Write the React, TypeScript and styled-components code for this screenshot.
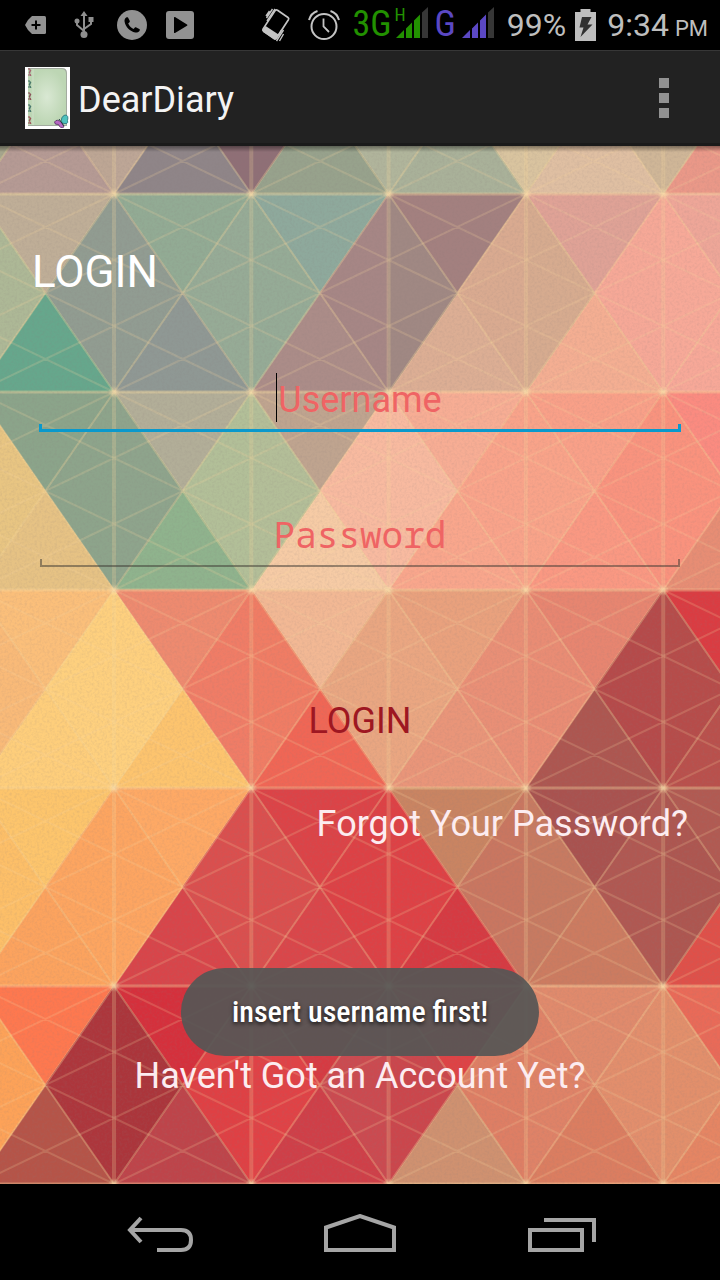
import React from "react";
import styled, { createGlobalStyle, css } from "styled-components";

const GlobalStyle = createGlobalStyle`
  *, *::before, *::after { box-sizing: border-box; }
  body { margin: 0; background: #000; font-family: Roboto, "Noto Sans", sans-serif; }
`;

const Screen = styled.div`
  min-height: 100vh;
  display: flex;
  flex-direction: column;
  background: #000;
`;

/* ---------- status bar ---------- */

const StatusBar = styled.header`
  height: 50px;
  padding: 0 12px;
  display: flex;
  align-items: center;
  justify-content: space-between;
  color: #bebebe;
`;

const StatusGroup = styled.div`
  display: flex;
  align-items: center;
`;

const IconSlot = styled.span`
  width: 48px;
  height: 50px;
  display: flex;
  align-items: center;
  justify-content: center;
`;

const StatusText = styled.span<{ $gap: number }>`
  font-size: 32px;
  line-height: 52px;
  margin-left: ${(p) => p.$gap}px;
  white-space: nowrap;
`;

const Meridiem = styled.small`
  font-size: 22px;
  line-height: 22px;
  margin-left: 6px;
`;

const Network = styled.span<{ $color: string; $gap: number }>`
  display: flex;
  align-items: flex-start;
  height: 50px;
  margin-left: ${(p) => p.$gap}px;
  color: ${(p) => p.$color};
  font-family: "Roboto Condensed", Roboto, sans-serif;
  font-size: 36px;
  line-height: 48px;
`;

const SignalBox = styled.span<{ $gap: number }>`
  position: relative;
  height: 50px;
  width: 33px;
  margin-left: ${(p) => p.$gap}px;
  display: flex;
  align-items: flex-start;
  padding-top: 7px;
`;

const NetworkBadge = styled.span`
  position: absolute;
  top: 6px;
  left: -1px;
  font-size: 18px;
  line-height: 18px;
`;

const BatterySlot = styled.span`
  display: flex;
  margin-left: 9px;
`;

/* ---------- action bar ---------- */

const ActionBar = styled.div`
  height: 96px;
  padding: 0 24px 1px 25px;
  display: flex;
  align-items: center;
  background: #222;
  border-top: 1px solid #373737;
  box-shadow: inset 0 -3px 0 #1a1a1a;
`;

const AppTitle = styled.h1`
  margin: 0 0 0 8px;
  padding-top: 3px;
  flex: 1;
  font-size: 36px;
  line-height: 48px;
  font-weight: 400;
  color: #f3f3f3;
`;

const OverflowButton = styled.button`
  width: 64px;
  height: 64px;
  padding: 0;
  border: 0;
  background: none;
  display: flex;
  flex-direction: column;
  align-items: center;
  justify-content: center;
  gap: 5px;
`;

const OverflowDot = styled.span`
  width: 10px;
  height: 10px;
  background: #929292;
`;

/* ---------- login form ---------- */

const Content = styled.main`
  position: relative;
  isolation: isolate;
  overflow: hidden;
  flex: 1;
  display: flex;
  flex-direction: column;
  padding: 100px 32px 84px;
`;

const Wallpaper = styled.svg`
  position: absolute;
  inset: 0;
  width: 100%;
  height: 100%;
  z-index: -1;
`;

const Form = styled.form`
  display: flex;
  flex-direction: column;
`;

const Heading = styled.h2`
  margin: 0 0 78px;
  font-size: 44px;
  line-height: 52px;
  font-weight: 400;
  color: #fff;
`;

const Fields = styled.div`
  display: flex;
  flex-direction: column;
  gap: 79px;
  padding: 0 7px;
`;

const Field = styled.label`
  position: relative;
  display: block;
`;

const fieldText = css`
  font-size: 36px;
  line-height: 48px;
  color: #ef6464;
`;

const Input = styled.input<{ $mono?: boolean }>`
  display: block;
  width: 100%;
  height: 48px;
  padding: 0 8px;
  border: 0;
  outline: 0;
  background: none;
  text-align: center;
  font-family: ${(p) =>
    p.$mono ? '"Noto Sans Mono", "DejaVu Sans Mono", monospace' : "Roboto, sans-serif"};
  ${fieldText}
  &::placeholder {
    color: #ef6464;
    opacity: 1;
  }
`;

const Underline = styled.span<{ $active?: boolean }>`
  display: block;
  height: 8px;
  margin: 0 ${(p) => (p.$active ? 0 : 1)}px;
  border: solid ${(p) => (p.$active ? "#0a99cc" : "rgba(60, 55, 50, 0.5)")};
  border-width: 0 ${(p) => (p.$active ? 3 : 2)}px ${(p) => (p.$active ? 3 : 2)}px;
`;

const Caret = styled.span`
  position: absolute;
  top: -3px;
  left: calc(50% - 84px);
  width: 1px;
  height: 49px;
  background: #000;
`;

const LoginButton = styled.button`
  align-self: center;
  margin: 130px 0 55px;
  padding: 0;
  border: 0;
  background: none;
  font-family: inherit;
  font-size: 36px;
  line-height: 48px;
  color: #9e1722;
`;

const TextLink = styled.a<{ $align: "center" | "flex-end" }>`
  align-self: ${(p) => p.$align};
  font-size: 36px;
  line-height: 48px;
  color: #fcecf0;
  text-decoration: none;
`;

const Spacer = styled.div`
  flex: 1;
`;

const Toast = styled.div`
  position: absolute;
  left: 50%;
  bottom: 128px;
  transform: translateX(-50%);
  height: 88px;
  padding: 0 51px;
  border-radius: 44px;
  background: rgba(86, 86, 85, 0.93);
  color: #fff;
  font-family: "Roboto Condensed", Roboto, sans-serif;
  font-weight: 500;
  font-size: 30px;
  line-height: 88px;
  white-space: nowrap;
  text-shadow: 0 2px 4px rgba(0, 0, 0, 0.75);
`;

/* ---------- navigation bar ---------- */

const NavBar = styled.nav`
  height: 96px;
  padding-top: 2px;
  display: flex;
  justify-content: center;
  background: #000;
`;

const NavButton = styled.button`
  width: 200px;
  padding: 0;
  border: 0;
  background: none;
  display: flex;
  align-items: center;
  justify-content: center;
`;

/* ---------- wallpaper ---------- */

const COL = 137.3;
const ROW = 198;
const X0 = -23.3;
const Y0 = -150;

/* Each cell holds its top, right, bottom and left triangle. */
const CELLS: string[][] = [
  [
    "b99a96 bda694 b59a94 a5a58c",
    "8f8588 8f6f76 8f8588 bda696",
    "97a28c b0b49b 97a28c 8f6f76",
    "a9b199 d9c49f a9b199 b0b59b",
    "dfbfa2 cfb697 dfbfa2 d9c39f",
    "ea9c8c ea9c8c ea9888 cfb697",
  ],
  [
    "bfae97 919c91 66a78c adb896",
    "92ab94 96ab96 8f9894 919c92",
    "8ea99c a68685 ab8c88 95ab96",
    "a3807f d9aa90 dcae94 a08883",
    "dfa296 f6a897 f4ae92 d6ab8f",
    "eea698 f7a898 f7a898 f7a998",
  ],
  [
    "8ba48a 8da48b e6c284 e8c582",
    "b2ae98 b2bf98 8fb38d 8ea48c",
    "bfa48f f8baa0 f6cba5 b3be98",
    "f7ad94 f9a38a f9a68c f8baa0",
    "f9a088 f9937e fa9882 f9a389",
    "fb8b80 e88a74 e78d74 fa927d",
  ],
  [
    "fbbf7a fed07e fece7b f9ba78",
    "ee8a6f f07c66 fdc46e fed07e",
    "f2b894 e9a681 f06655 f07c64",
    "e9a17d e98f76 e99579 eaa681",
    "e78570 b54a4a ad5650 e98c74",
    "da3c42 b54a4a b9504c b64c4a",
  ],
  [
    "fdc56c fda560 fca35e fdbf68",
    "fea965 da4f4e d8454a fda561",
    "dc4347 dd4145 da464a da4f4e",
    "c98462 c97660 d63a42 de4145",
    "a9524f b05852 cc7b60 c77a61",
    "b15a52 b15a52 df5049 ad5650",
  ],
  [
    "fe784f ad363c b55448 fda258",
    "d5303c df4044 be444a ab353b",
    "d63a42 cb4a50 cf3f48 e04246",
    "de4245 de7e64 cf9170 cb464c",
    "e08a6c e28e6c db7d60 df8267",
    "e96a58 e58563 e58563 e28f6b",
  ],
];

function Background() {
  const tiles: React.ReactNode[] = [];
  const steep: string[] = [];
  const shallow: string[] = [];
  const joints: React.ReactNode[] = [];
  CELLS.forEach((row, r) =>
    row.forEach((cell, c) => {
      const x = X0 + c * COL;
      const y = Y0 + r * ROW;
      const a = `${x},${y}`;
      const b = `${x + COL},${y}`;
      const d = `${x + COL},${y + ROW}`;
      const e = `${x},${y + ROW}`;
      const m = `${x + COL / 2},${y + ROW / 2}`;
      const sides = [`${a} ${b}`, `${b} ${d}`, `${d} ${e}`, `${e} ${a}`];
      cell.split(" ").forEach((hex, i) => {
        tiles.push(
          <polygon key={`${r}-${c}-${i}`} points={`${sides[i]} ${m}`} fill={`#${hex}`} stroke={`#${hex}`} />
        );
      });
      steep.push(`M${a}L${d}M${b}L${e}`);
      for (let k = 0; k < 3; k++) {
        const t = y + (k * ROW) / 3;
        const u = t + ROW / 3;
        shallow.push(`M${x},${t}L${x + COL},${u}M${x},${u}L${x + COL},${t}`);
      }
      joints.push(<circle key={`j${r}-${c}`} cx={x + COL} cy={y + ROW} r="6" fill="url(#joint)" />);
    })
  );
  const rows = CELLS.map((_, r) => `M0,${Y0 + (r + 1) * ROW}H720`).join("");
  const cols = CELLS.map((_, c) => `M${X0 + (c + 1) * COL},0V1038`).join("");
  return (
    <Wallpaper viewBox="0 0 720 1038" preserveAspectRatio="none" aria-hidden="true">
      <defs>
        <radialGradient id="joint">
          <stop offset="0" stopColor="#fbdfae" stopOpacity="0.6" />
          <stop offset="1" stopColor="#fbdfae" stopOpacity="0" />
        </radialGradient>
        <linearGradient id="barShadow" x1="0" y1="0" x2="0" y2="1">
          <stop offset="0" stopColor="#000" stopOpacity="0.4" />
          <stop offset="1" stopColor="#000" stopOpacity="0" />
        </linearGradient>
        <filter id="grain" x="0" y="0" width="100%" height="100%">
          <feTurbulence type="fractalNoise" baseFrequency="0.4" numOctaves="2" seed="4" />
          <feColorMatrix values="0 0 0 0 0.25  0 0 0 0 0.2  0 0 0 0 0.2  1 0 0 0 -0.4" />
        </filter>
      </defs>
      {tiles}
      <g fill="none" stroke="#f8d9a0">
        <path d={shallow.join("")} strokeWidth="2" strokeOpacity="0.2" />
        <path d={steep.join("")} strokeWidth="2" strokeOpacity="0.32" />
        <path d={cols} strokeWidth="4" strokeOpacity="0.24" />
        <path d={rows} strokeWidth="3" strokeOpacity="0.38" />
      </g>
      {joints}
      <rect width="720" height="1038" filter="url(#grain)" opacity="0.3" />
      <rect width="720" height="6" fill="url(#barShadow)" />
    </Wallpaper>
  );
}

/* ---------- icons ---------- */

const TagIcon = () => (
  <svg width="22" height="18" viewBox="0 0 22 18">
    <path d="M7 0h12.500a1.500 1.500 0 0 1 1.500 1.500v15a1.500 1.500 0 0 1-1.500 1.500H7L3 14 0 9l3-5z" fill="#929292" />
    <path d="M6.500 9h9M11 4.500v9" stroke="#000" strokeWidth="2" />
  </svg>
);

const UsbIcon = () => (
  <svg width="20" height="28" viewBox="0 0 20 28" fill="none" stroke="#8f8f8f" strokeWidth="2">
    <path d="M10 4v18M3 10v4l7 6M17 8v5l-7 5" />
    <path d="M10 0l3.500 5h-7z" fill="#8f8f8f" stroke="none" />
    <circle cx="10" cy="23.500" r="3.500" fill="#8f8f8f" stroke="none" />
    <circle cx="3" cy="10" r="2.500" fill="#8f8f8f" stroke="none" />
    <path d="M14.500 6h5v5h-5z" fill="#8f8f8f" stroke="none" />
  </svg>
);

const PhoneIcon = () => (
  <svg width="30" height="30" viewBox="0 0 30 30">
    <circle cx="15" cy="15" r="15" fill="#929292" />
    <path
      d="M9.600 7.300c-1.500.8-2.400 2.400-2 4.500C8.600 17 13 21.500 18.200 22.500c2 .4 3.600-.6 4.500-2.100.3-.5.100-1-.4-1.300l-3-1.700c-.5-.3-1-.2-1.400.2l-1.300 1.400c-2.500-1.200-4.300-3-5.400-5.500l1.300-1.300c.4-.4.500-.9.200-1.400l-1.700-3.200c-.3-.5-.9-.6-1.400-.3z"
      fill="#000"
    />
  </svg>
);

const PlayIcon = () => (
  <svg width="28" height="28" viewBox="0 0 28 28">
    <rect width="28" height="28" rx="3" fill="#929292" />
    <path d="M8 6.500v15c0 .5.500.8 1 .5l12-7.200c.5-.3.500-1 0-1.300L9 6c-.5-.3-1 0-1 .5z" fill="#000" />
  </svg>
);

const VibrateIcon = () => (
  <svg width="30" height="34" viewBox="0 0 30 34" fill="none" stroke="#c4c4c4">
    <path d="M16.500 2.200L27 9.500q1.200.9.400 2.200L15.500 30q-1 1.400-2.400.4L2.500 23.200q-1.200-1-.4-2.300L14 2.700q1-1.400 2.500-.5z" strokeWidth="1.700" />
    <path d="M4.600 18L18.300 27l-2.800 4q-1.100 1.400-2.600.4L2.400 24q-1.300-1-.5-2.300z" fill="#c4c4c4" stroke="none" />
    <path d="M11.500 1L5.500 10M8.500 3L5 8M14 1L6 13M22.500 22l-7 11M22.500 26l-4 7M20.500 22l-3 5" strokeWidth="1.400" />
  </svg>
);

const AlarmIcon = () => (
  <svg width="32" height="32" viewBox="0 0 32 32" fill="none" stroke="#c4c4c4" strokeWidth="2">
    <circle cx="16" cy="17.500" r="12.500" />
    <path d="M15.500 9.500v8l5.500 5.500" strokeWidth="1.800" />
    <path d="M1 11Q3 4 9.500 2M31 11Q29 4 22.500 2" />
  </svg>
);

const SignalIcon = () => (
  <svg width="32" height="31" viewBox="0 0 32 31" fill="currentColor">
    <path d="M0 31L8 23V31zM10 21.500L16 15.500V31H10zM18 13.500L24 7.500V31H18z" />
    <path d="M26 5.500L32 0V31H26z" fill="#363636" />
  </svg>
);

const BatteryIcon = () => (
  <svg width="21" height="32" viewBox="0 0 21 32">
    <path d="M5.500 0h10v3H21v29H0V3h5.500z" fill="#bebebe" />
    <path d="M7 8h9.500l-4 7.500H17.500L5.500 28l3-9.500H4.500z" fill="#303030" />
  </svg>
);

const coils = [
  [4, "#a2596b"],
  [16, "#3d6f62"],
  [28, "#86464f"],
  [40, "#3b6c66"],
  [52, "#9a4850"],
] as const;

const DiaryIcon = () => (
  <svg width="45" height="62" viewBox="0 0 45 62" role="img" aria-label="Diary">
    <defs>
      <radialGradient id="page">
        <stop offset="0" stopColor="#d9e8d3" />
        <stop offset="1" stopColor="#bdd6b4" />
      </radialGradient>
    </defs>
    <path d="M0 0h45v62H0z" fill="#fff" />
    <path d="M3 1h34q5 0 5 5v53H3z" fill="#a3aca0" />
    <path d="M3 2h33q5 0 5 5v51H3z" fill="url(#page)" />
    <path d="M8 2v56" stroke="#cfe0c9" />
    {coils.map(([y, color]) => (
      <path key={y} d={`M3 ${y - 2}q3-1 2 2t1 5M6 ${y - 1}l-2 3M3 ${y + 4}h3`} fill="none" stroke={color} strokeWidth="1" />
    ))}
    <path d="M37 56Q35 50 40 48q4 0 2.500 5.500Q44 58 37 56z" fill="#4fc3be" stroke="#256f78" strokeWidth=".8" />
    <path d="M37 56Q32 51 29.500 55q0 3 4 2.500Q35 62 39 60z" fill="#b768c4" stroke="#53305f" strokeWidth=".8" />
    <path d="M34 52l5 7" stroke="#263b46" />
  </svg>
);

const BackIcon = () => (
  <svg width="66" height="38" viewBox="0 0 66 38" fill="none" stroke="#a5a5a5" strokeWidth="4">
    <path d="M3 16h51q10 0 10 10t-10 10H30" />
    <path d="M14 4L3 16l11 12" />
  </svg>
);

const HomeIcon = () => (
  <svg width="72" height="38" viewBox="0 0 72 38" fill="none" stroke="#a5a5a5" strokeWidth="4">
    <path d="M2 36V13.500L36 2l34 11.500V36z" />
  </svg>
);

const RecentsIcon = () => (
  <svg width="72" height="38" viewBox="-4 0 72 38" fill="none" stroke="#a5a5a5" strokeWidth="4">
    <path d="M2 16h52v20H2zM16 6h50v22" />
  </svg>
);

export default function App() {
  return (
    <Screen>
      <GlobalStyle />
      <StatusBar>
        <StatusGroup>
          <IconSlot><TagIcon /></IconSlot>
          <IconSlot><UsbIcon /></IconSlot>
          <IconSlot><PhoneIcon /></IconSlot>
          <IconSlot><PlayIcon /></IconSlot>
        </StatusGroup>
        <StatusGroup>
          <IconSlot><VibrateIcon /></IconSlot>
          <IconSlot><AlarmIcon /></IconSlot>
          <Network $color="#229100" $gap={4}>
            3G
            <SignalBox $gap={4}>
              <NetworkBadge>H</NetworkBadge>
              <SignalIcon />
            </SignalBox>
          </Network>
          <Network $color="#5b48c4" $gap={6}>
            G
            <SignalBox $gap={6}><SignalIcon /></SignalBox>
          </Network>
          <StatusText $gap={12}>99%</StatusText>
          <BatterySlot><BatteryIcon /></BatterySlot>
          <StatusText $gap={11}>
            9:34<Meridiem>PM</Meridiem>
          </StatusText>
        </StatusGroup>
      </StatusBar>

      <ActionBar>
        <DiaryIcon />
        <AppTitle>DearDiary</AppTitle>
        <OverflowButton type="button" aria-label="More options">
          <OverflowDot />
          <OverflowDot />
          <OverflowDot />
        </OverflowButton>
      </ActionBar>

      <Content>
        <Background />
        <Form onSubmit={(e) => e.preventDefault()}>
          <Heading>LOGIN</Heading>
          <Fields>
            <Field>
              <Input type="text" name="username" placeholder="Username" aria-label="Username" />
              <Caret />
              <Underline $active />
            </Field>
            <Field>
              <Input $mono type="password" name="password" placeholder="Password" aria-label="Password" />
              <Underline />
            </Field>
          </Fields>
          <LoginButton type="submit">LOGIN</LoginButton>
          <TextLink $align="flex-end" href="#forgot">Forgot Your Password?</TextLink>
        </Form>
        <Spacer />
        <TextLink $align="center" href="#register">Haven't Got an Account Yet?</TextLink>
        <Toast role="status">insert username first!</Toast>
      </Content>

      <NavBar>
        <NavButton type="button" aria-label="Back"><BackIcon /></NavButton>
        <NavButton type="button" aria-label="Home"><HomeIcon /></NavButton>
        <NavButton type="button" aria-label="Recent apps"><RecentsIcon /></NavButton>
      </NavBar>
    </Screen>
  );
}
